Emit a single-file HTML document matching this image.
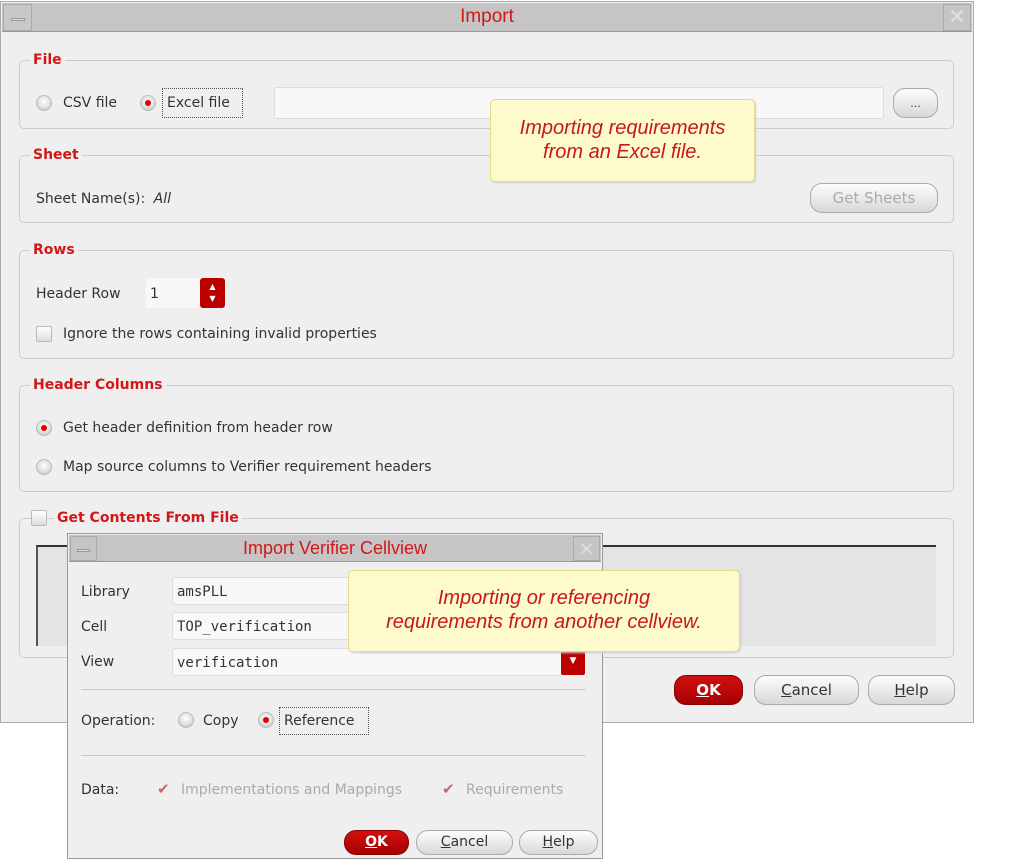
<!DOCTYPE html>
<html><head><meta charset="utf-8"><style>
*{box-sizing:border-box;margin:0;padding:0}
body{width:1011px;height:867px;background:#fff;position:relative;overflow:hidden;font-family:"DejaVu Sans","Liberation Sans",sans-serif;font-size:14px;color:#333}
.a{position:absolute}
.t{margin-top:2px}
.dlg{background:#efefef;border:1px solid #aaa}
.tb{background:#c6c4c4;border-bottom:1px solid #999}
.grp{position:absolute;border:1px solid #ccc;border-radius:5px}
.lbl{position:absolute;background:#efefef;color:#d01818;font-weight:bold;padding:0 3px;font-size:14px;margin-top:2px}
.rad{position:absolute;width:16px;height:16px;border-radius:50%;background:radial-gradient(circle at 50% 40%,#fff,#ddd 60%,#aaa);border:1px solid #bbb}
.rad.on::after{content:"";position:absolute;left:4px;top:4px;width:6px;height:6px;border-radius:50%;background:#d00}
.chk{position:absolute;width:16px;height:16px;border:1px solid #bbb;border-radius:2px;background:linear-gradient(#fff,#ddd)}
.btn{position:absolute;border:1px solid #aaa;border-radius:12px;background:linear-gradient(#fdfdfd,#d8d8d8);text-align:center;color:#333;font-size:15px}
.ok{background:linear-gradient(#d21010,#a50000);border-color:#800;color:#fff;font-weight:bold}
.fld{position:absolute;background:#f8f8f8;border:1px solid #ddd;border-radius:3px;font-family:"DejaVu Sans Mono","Liberation Mono",monospace;font-size:14px;padding-left:4px}
.tip{position:absolute;background:#fdfacd;border:1px solid #e8d88a;border-radius:5px;color:#c81818;font-style:italic;font-family:"Liberation Sans",sans-serif;font-size:20px;text-align:center;line-height:24px;box-shadow:1px 1px 2px #ccc}
</style></head><body>
<div class="a dlg" style="left:0;top:1px;width:974px;height:722px"></div>
<div class="a tb" style="left:2px;top:3px;width:970px;height:29px"></div>
<div class="a" style="left:3px;top:4px;width:29px;height:27px;border:1px solid #aaa;background:#c8c8c8"><div class="a" style="left:7px;top:13px;width:14px;height:3px;background:#ddd;border:1px solid #999"></div></div>
<div class="a" style="left:943px;top:4px;width:28px;height:27px;border:1px solid #aaa;color:#e0e0e0;font-size:22px;text-align:center;line-height:26px">✕</div>
<div class="a" style="left:0;top:6px;width:974px;text-align:center;color:#d01818;font-size:19px;font-family:'Liberation Sans',sans-serif">Import</div>

<div class="grp" style="left:19px;top:60px;width:935px;height:69px"></div><div class="lbl" style="left:30px;top:50px">File</div>
<div class="rad" style="left:36px;top:95px"></div><div class="a t" style="left:63px;top:93px">CSV file</div>
<div class="rad on" style="left:140px;top:95px"></div><div class="a" style="left:162px;top:88px;width:81px;height:30px;border:1px dotted #555;padding:6px 0 0 4px">Excel file</div>
<div class="a" style="left:274px;top:87px;width:610px;height:32px;background:#f8f8f8;border:1px solid #ddd;border-radius:3px"></div>
<div class="btn" style="left:893px;top:88px;width:45px;height:30px;font-size:11px;line-height:30px">...</div>

<div class="grp" style="left:19px;top:155px;width:935px;height:68px"></div><div class="lbl" style="left:30px;top:145px">Sheet</div>
<div class="a t" style="left:36px;top:189px">Sheet Name(s): <i style="margin-left:4px">All</i></div>
<div class="btn" style="left:810px;top:183px;width:128px;height:30px;line-height:28px;color:#aaa">Get Sheets</div>

<div class="grp" style="left:19px;top:250px;width:935px;height:109px"></div><div class="lbl" style="left:30px;top:240px">Rows</div>
<div class="a t" style="left:36px;top:284px">Header Row</div>
<div class="a" style="left:146px;top:278px;width:56px;height:30px;background:#f8f8f8;padding:8px 0 0 4px">1</div>
<div class="a" style="left:200px;top:278px;width:25px;height:30px;background:#b00;border-radius:3px;color:#fff;font-size:8px;text-align:center;line-height:12px;padding-top:3px">▲<br>▼</div>
<div class="chk" style="left:36px;top:326px"></div><div class="a t" style="left:63px;top:324px">Ignore the rows containing invalid properties</div>

<div class="grp" style="left:19px;top:385px;width:935px;height:107px"></div><div class="lbl" style="left:30px;top:375px">Header Columns</div>
<div class="rad on" style="left:36px;top:420px"></div><div class="a t" style="left:63px;top:418px">Get header definition from header row</div>
<div class="rad" style="left:36px;top:459px"></div><div class="a t" style="left:63px;top:457px">Map source columns to Verifier requirement headers</div>

<div class="grp" style="left:19px;top:518px;width:935px;height:140px"></div>
<div class="chk" style="left:31px;top:510px"></div><div class="lbl" style="left:54px;top:508px">Get Contents From File</div>
<div class="a" style="left:36px;top:545px;width:900px;height:101px;background:#e4e4e4;border-top:2px solid #333;border-left:2px solid #555"></div>

<div class="btn ok" style="left:674px;top:675px;width:69px;height:30px;line-height:28px"><u>O</u>K</div>
<div class="btn" style="left:754px;top:675px;width:105px;height:30px;line-height:28px"><u>C</u>ancel</div>
<div class="btn" style="left:868px;top:675px;width:87px;height:30px;line-height:28px"><u>H</u>elp</div>

<div class="tip" style="left:490px;top:99px;width:265px;height:83px;padding-top:16px">Importing requirements<br>from an Excel file.</div>

<div class="a dlg" style="left:67px;top:533px;width:536px;height:326px;border-color:#999"></div>
<div class="a tb" style="left:69px;top:535px;width:532px;height:27px"></div>
<div class="a" style="left:70px;top:536px;width:27px;height:25px;border:1px solid #aaa"><div class="a" style="left:6px;top:12px;width:13px;height:3px;background:#ddd;border:1px solid #999"></div></div>
<div class="a" style="left:573px;top:536px;width:27px;height:25px;border:1px solid #aaa;color:#ddd;font-size:20px;text-align:center;line-height:24px">✕</div>
<div class="a" style="left:67px;top:538px;width:536px;text-align:center;color:#d01818;font-size:18px;font-family:'Liberation Sans',sans-serif">Import Verifier Cellview</div>

<div class="a t" style="left:81px;top:582px">Library</div>
<div class="fld" style="left:172px;top:577px;width:180px;height:28px;line-height:28px">amsPLL</div>
<div class="a t" style="left:81px;top:617px">Cell</div>
<div class="fld" style="left:172px;top:612px;width:180px;height:28px;line-height:28px">TOP_verification</div>
<div class="a t" style="left:81px;top:652px">View</div>
<div class="fld" style="left:172px;top:648px;width:390px;height:28px;line-height:28px">verification</div>
<div class="a" style="left:561px;top:648px;width:24px;height:27px;background:#b00;border-radius:2px;color:#fff;font-size:9px;text-align:center;line-height:27px">▼</div>
<div class="a" style="left:81px;top:689px;width:505px;height:1px;background:#ccc"></div>
<div class="a t" style="left:81px;top:711px">Operation:</div>
<div class="rad" style="left:178px;top:712px"></div><div class="a t" style="left:203px;top:711px">Copy</div>
<div class="rad on" style="left:258px;top:712px"></div><div class="a" style="left:279px;top:707px;width:90px;height:28px;border:1px dotted #555;padding:5px 0 0 4px">Reference</div>
<div class="a" style="left:81px;top:755px;width:505px;height:1px;background:#ccc"></div>
<div class="a t" style="left:81px;top:780px">Data:</div>
<div class="a" style="left:157px;top:780px;color:#c66;font-size:15px">✔</div><div class="a t" style="left:181px;top:780px;color:#aaa">Implementations and Mappings</div>
<div class="a" style="left:442px;top:780px;color:#c66;font-size:15px">✔</div><div class="a t" style="left:466px;top:780px;color:#aaa">Requirements</div>
<div class="btn ok" style="left:344px;top:830px;width:65px;height:25px;line-height:23px;font-size:14px"><u>O</u>K</div>
<div class="btn" style="left:416px;top:830px;width:97px;height:25px;line-height:23px;font-size:14px"><u>C</u>ancel</div>
<div class="btn" style="left:519px;top:830px;width:79px;height:25px;line-height:23px;font-size:14px"><u>H</u>elp</div>

<div class="tip" style="left:348px;top:570px;width:392px;height:82px;padding-top:15px">Importing or referencing<br>requirements from another cellview.</div>
</body></html>
